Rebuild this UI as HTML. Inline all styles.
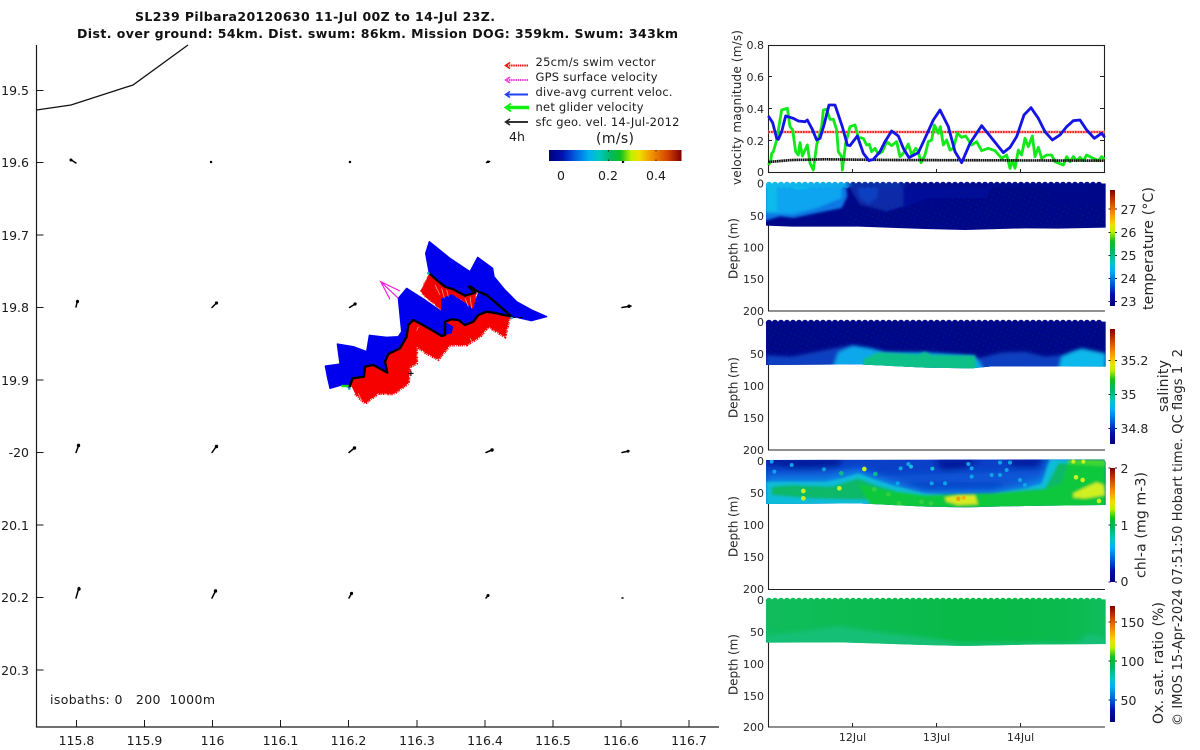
<!DOCTYPE html>
<html><head><meta charset="utf-8"><title>SL239 Pilbara20120630</title>
<style>
html,body{margin:0;padding:0;background:#fff;width:1200px;height:750px;overflow:hidden}
svg{display:block}
text{font-family:"DejaVu Sans",sans-serif;fill:#262626;font-size:11px;white-space:pre}
.m{font-size:12.5px;fill:#1a1a1a}
.c{font-size:12.5px}
.l{font-size:14px}
.leg{font-size:11.5px;fill:#1a1a1a}
</style></head><body>
<svg width="1200" height="750" viewBox="0 0 1200 750" xmlns="http://www.w3.org/2000/svg">
<defs>
<linearGradient id="jv" x1="0" y1="1" x2="0" y2="0">
<stop offset="0" stop-color="#00007f"/><stop offset=".1" stop-color="#0010b0"/><stop offset=".2" stop-color="#0060e0"/><stop offset=".3" stop-color="#00b0f0"/><stop offset=".38" stop-color="#00c8c0"/><stop offset=".47" stop-color="#00b860"/><stop offset=".56" stop-color="#10c020"/><stop offset=".64" stop-color="#c0f000"/><stop offset=".7" stop-color="#f0e000"/><stop offset=".8" stop-color="#f09000"/><stop offset=".9" stop-color="#d04000"/><stop offset="1" stop-color="#800000"/>
</linearGradient>
<linearGradient id="jh" x1="0" y1="0" x2="1" y2="0">
<stop offset="0" stop-color="#00007f"/><stop offset=".1" stop-color="#0010b0"/><stop offset=".2" stop-color="#0060e0"/><stop offset=".3" stop-color="#00b0f0"/><stop offset=".38" stop-color="#00c8c0"/><stop offset=".47" stop-color="#00b860"/><stop offset=".54" stop-color="#10c020"/><stop offset=".62" stop-color="#c0f000"/><stop offset=".68" stop-color="#f0e000"/><stop offset=".78" stop-color="#f09000"/><stop offset=".9" stop-color="#d04000"/><stop offset="1" stop-color="#800000"/>
</linearGradient>
<linearGradient id="tt" gradientUnits="userSpaceOnUse" x1="766" y1="0" x2="1106" y2="0">
<stop offset="0" stop-color="#10bcec"/><stop offset=".23" stop-color="#10a8ec"/><stop offset=".255" stop-color="#0a30a8"/><stop offset=".39" stop-color="#0a30a8"/><stop offset=".42" stop-color="#040c90"/><stop offset="1" stop-color="#00088a"/>
</linearGradient>
<linearGradient id="ox" gradientUnits="userSpaceOnUse" x1="766" y1="0" x2="1106" y2="0">
<stop offset="0" stop-color="#10bc5c"/><stop offset=".35" stop-color="#0cbb50"/><stop offset=".6" stop-color="#08ba46"/><stop offset=".85" stop-color="#0aba4c"/><stop offset="1" stop-color="#10bc5c"/>
</linearGradient>
<filter id="b1" x="-5%" y="-5%" width="110%" height="110%"><feGaussianBlur stdDeviation="1.300"/></filter>
<filter id="b15" x="-5%" y="-10%" width="110%" height="120%"><feGaussianBlur stdDeviation="1.800"/></filter>
<filter id="b2" x="-5%" y="-5%" width="110%" height="110%"><feGaussianBlur stdDeviation="2.400"/></filter>
<filter id="b3" x="-10%" y="-10%" width="120%" height="120%"><feGaussianBlur stdDeviation="3.500"/></filter>
<filter id="rough" x="-10%" y="-10%" width="120%" height="120%"><feTurbulence type="fractalNoise" baseFrequency=".25" numOctaves="2" seed="4"/><feDisplacementMap in="SourceGraphic" scale="8" xChannelSelector="R" yChannelSelector="G"/></filter>
<pattern id="dots" width="5" height="5" patternUnits="userSpaceOnUse" patternTransform="rotate(25)"><rect x="2" y="2" width="1" height="1" fill="#141e62"/></pattern>
<clipPath id="ct"><polygon transform="translate(725,175) scale(.33333)" points="123,25.500 1142,25.500 1142,158 1000,161 900,160 720,165 600,162 400,155 200,155 123,152"/></clipPath>
<clipPath id="cs"><polygon transform="translate(725,315) scale(.33333)" points="123,20 1142,20 1142,155 800,154 740,160 600,158 400,148 123,150"/></clipPath>
<clipPath id="cc"><polygon transform="translate(725,450) scale(.33333)" points="123,30 1138,28 1142,36 1142,165 900,168 720,172 600,170 400,160 123,162"/></clipPath>
<clipPath id="co"><polygon transform="translate(725,590) scale(.33333)" points="123,28 1142,28 1142,162 900,164 720,168 600,165 350,157 123,158"/></clipPath>
</defs>

<!-- Title -->
<text x="135" y="21" style="font-size:12.5px;font-weight:bold;fill:#111" textLength="360">SL239 Pilbara20120630 11-Jul 00Z to 14-Jul 23Z.</text>
<text x="77" y="38" style="font-size:12.5px;font-weight:bold;fill:#111" textLength="601">Dist. over ground: 54km. Dist. swum: 86km. Mission DOG: 359km. Swum: 343km</text>

<!-- Map axes -->
<path d="M36.5 45V727H719" fill="none" stroke="#1a1a1a" stroke-width="1.2"/>
<path d="M36.5 90.500h7M36.500 162.500h7M36.500 235h7M36.500 307.500h7M36.500 380h7M36.500 452.500h7M36.500 525h7M36.500 597.500h7M36.500 670h7M76.500 727v-7M144.500 727v-7M212.500 727v-7M280.500 727v-7M348.500 727v-7M417 727v-7M485 727v-7M553 727v-7M621 727v-7M689 727v-7" stroke="#1a1a1a" fill="none"/>
<g text-anchor="end">
<text class="m" x="29" y="95">19.5</text><text class="m" x="29" y="167">19.6</text><text class="m" x="29" y="240">19.7</text><text class="m" x="29" y="312">19.8</text><text class="m" x="29" y="385">19.9</text><text class="m" x="29" y="457">-20</text><text class="m" x="29" y="530">20.1</text><text class="m" x="29" y="602">20.2</text><text class="m" x="29" y="675">20.3</text>
</g>
<g text-anchor="middle">
<text class="m" x="76.500" y="745">115.8</text><text class="m" x="144.500" y="745">115.9</text><text class="m" x="212.500" y="745">116</text><text class="m" x="280.500" y="745">116.1</text><text class="m" x="348.500" y="745">116.2</text><text class="m" x="417" y="745">116.3</text><text class="m" x="485" y="745">116.4</text><text class="m" x="553" y="745">116.5</text><text class="m" x="621" y="745">116.6</text><text class="m" x="689" y="745">116.7</text>
</g>
<text class="m" x="50" y="704" textLength="165" xml:space="preserve">isobaths: 0   200  1000m</text>
<polyline points="36.500,110 71,105 133,85 188,45" fill="none" stroke="#111" stroke-width="1.300"/>

<!-- Map arrows -->
<g stroke="#000" stroke-width="1.500" fill="none" stroke-linecap="round">
<path d="M76 163L70.500 159.500M211 162.300h.5M349.500 162.300l.8-.5M486.500 162.500l3-1M622.500 162.300l1-.3"/>
<path d="M76 307L77.500 300.500M212 307.500L217 302.500M349.500 307.500L356 303.500M622 307.500L631 306"/>
<path d="M76 452.500L79 444.500M212 452.500L217 445.500M349 452.500L355 447.500M486 452.500L493 449.500M622 452.500L629 451"/>
<path d="M76 598L79 587.500M212 598L216 590M349 598L352 592.500M486 598L488.500 595"/>
<path d="M622 598h1"/>
</g>
<g fill="#000">
<circle cx="71" cy="160" r="1.500"/><circle cx="77.500" cy="301.500" r="1.600"/><circle cx="216.500" cy="303" r="1.600"/><circle cx="355" cy="304" r="1.600"/><circle cx="629" cy="306.200" r="1.700"/>
<circle cx="78.500" cy="445.500" r="1.700"/><circle cx="216.500" cy="446.500" r="1.700"/><circle cx="354.500" cy="448" r="1.700"/><circle cx="492" cy="450" r="1.700"/><circle cx="628" cy="451.200" r="1.400"/>
<circle cx="79" cy="589" r="1.700"/><circle cx="215.500" cy="591" r="1.700"/><circle cx="351.500" cy="593.500" r="1.600"/><circle cx="488" cy="595.500" r="1.500"/>
<circle cx="211" cy="162" r="1.200"/><circle cx="350" cy="162" r="1.200"/><circle cx="488" cy="161.800" r="1.300"/>
</g>

<!-- Glider track blob -->
<g transform="translate(310,230) scale(.33333)">
<g filter="url(#rough)">
<polygon fill="#f20000" points="358,130 380,150 405,170 430,178 465,195 482,170 500,185 495,250 460,215 425,195 395,207 398,245 350,205 330,185"/>
</g>
<g fill="#0000ee" stroke="#0000ee" stroke-width="4" stroke-linejoin="round">
<polygon points="358,130 347,70 358,35 420,85 480,125 503,82 548,115 552,140 585,180 620,215 665,240 710,260 665,272 620,262 605,260 565,225 530,195 500,183 495,190 465,195 430,178 405,170 380,150"/>
<polygon points="118,472 95,465 60,475 52,440 46,408 90,402 82,342 130,350 170,365 178,316 230,322 265,320 275,305 265,205 290,175 345,210 395,245 395,207 425,195 465,220 490,240 505,190 530,195 605,260 560,250 530,245 505,255 490,275 465,285 445,270 425,268 405,275 430,290 425,310 395,318 365,300 335,283 310,270 295,285 290,320 270,355 235,372 225,395 232,428 190,405 165,410 162,440 128,445"/>
</g>
<polygon fill="#f60000" points="118,472 128,445 162,440 165,410 190,405 232,428 225,395 235,372 270,355 290,320 295,285 310,270 335,283 365,300 395,318 425,310 430,290 405,275 425,268 445,270 465,285 490,275 505,255 530,245 560,250 600,258 585,320 560,305 535,290 510,320 470,345 420,345 385,388 350,370 320,350 320,400 300,410 295,460 250,492 205,490 165,520 135,490 125,470"/>
<polyline fill="none" stroke="#f60000" stroke-width="9" stroke-dasharray="3 2 5 3 2 4 4 2" points="600,258 585,320 560,305 535,290 510,320 470,345 420,345 385,388 350,370 320,350 320,400 300,410 295,460 250,492 205,490 165,520 135,490"/>
<path d="M375 165l15 30M395 175l8 30M480 200l5 35M465 205l10 25M325 290l-5 12M480 325l6 10M145 490l10 22M410 180l5 20" stroke="#fff" stroke-width="2" fill="none" opacity=".7"/>
<polyline points="118,472 128,445 162,440 165,410 190,405 232,428 225,395 235,372 270,355 290,320 295,285 310,270 335,283 365,300 395,318 405,315 405,275 425,268 445,270 465,285 490,275 505,255 530,245 560,250 605,260 565,225 530,195 500,183 482,170 476,170 495,188 465,197 430,178 405,170 380,150 358,130" fill="none" stroke="#000" stroke-width="7" stroke-linejoin="round"/>
<path d="M605 262h40" stroke="#000" stroke-width="3" stroke-dasharray="12 8"/>
<path d="M94 468h22" stroke="#10e010" stroke-width="7"/>
<circle cx="118" cy="476" r="4" fill="#10b0e0"/><circle cx="355" cy="130" r="4" fill="#10b0b0"/><circle cx="605" cy="264" r="4" fill="#10b0e0"/>
<path d="M270 183L212 155L240 208M212 155L265 205" fill="none" stroke="#ee20e0" stroke-width="3.500"/>
<path d="M303 422v16M295 430h16" stroke="#000" stroke-width="3"/>
</g>

<!-- Legend -->
<g fill="none" stroke-width="1.500">
<path d="M528 65.500H507" stroke="#f01010" stroke-dasharray="1.500 .7" stroke-width="2"/><path d="M510 62.500L505.500 65.500L510 68.500" stroke="#f01010"/>
<path d="M528 80H507" stroke="#f040e0" stroke-dasharray="1.500 .7" stroke-width="2"/><path d="M510 77L505.500 80L510 83" stroke="#f040e0"/>
<path d="M528 94.500H507" stroke="#2040f0" stroke-width="2"/><path d="M510 91.500L505.500 94.500L510 97.500" stroke="#2040f0"/>
<path d="M529 107.500H507" stroke="#10f010" stroke-width="3.500"/><path d="M511 103.500L505.500 107.500L511 111.500" stroke="#10f010" stroke-width="2"/>
<path d="M528 122H507" stroke="#333" stroke-width="2"/><path d="M510 119L505.500 122L510 125" stroke="#222"/>
</g>
<text class="leg" x="535.500" y="66" textLength="120">25cm/s swim vector</text>
<text class="leg" x="535.500" y="81" textLength="122">GPS surface velocity</text>
<text class="leg" x="535.500" y="96" textLength="137">dive-avg current veloc.</text>
<text class="leg" x="535.500" y="111" textLength="108">net glider velocity</text>
<text class="leg" x="535.500" y="126" textLength="144">sfc geo. vel. 14-Jul-2012</text>
<text x="509" y="141" style="font-size:12.5px;fill:#1a1a1a">4h</text>
<text x="596" y="143" style="font-size:14px;fill:#1a1a1a" textLength="38">(m/s)</text>
<rect x="549" y="150" width="132.500" height="11" fill="url(#jh)"/>
<path d="M561 150v1.500M608.500 150v1.500M656 150v1.500M561 161v-1.500M608.500 161v-1.500M656 161v-1.500" stroke="#222"/>
<path d="M622 161.500l2 .5" stroke="#000" stroke-width="1.500"/>
<g text-anchor="middle"><text class="m" x="561" y="180">0</text><text class="m" x="608" y="180">0.2</text><text class="m" x="656" y="180">0.4</text></g>

<!-- Velocity chart -->
<rect x="768.500" y="45.500" width="336" height="127" fill="#fff" stroke="#222" stroke-width="1.100"/>
<path d="M1104 76.500h-4M1104 108.500h-4M1104 140.500h-4M768 76.500h4M768 108.500h4M768 140.500h4M852.500 172v-3M936.500 172v-3M1020.500 172v-3" stroke="#222"/>
<g text-anchor="end"><text x="764" y="49">0.8</text><text x="764" y="81">0.6</text><text x="764" y="113">0.4</text><text x="764" y="145">0.2</text><text x="764" y="176">0</text></g>
<text transform="translate(741,185) rotate(-90)" style="font-size:12px" textLength="155">velocity magnitude (m/s)</text>
<g transform="translate(725,30) scale(.33333)" fill="none" stroke-linejoin="round">
<path d="M130 306H1139" stroke="#ffb0b0" stroke-width="9"/>
<path d="M130 306H1139" stroke="#f01010" stroke-width="5" stroke-dasharray="5 3"/>
<polyline stroke="#12e81a" stroke-width="8.500" points="130,405 137,395 140,370 145,365 155,330 170,240 187,235 195,290 203,300 212,365 220,375 225,338 232,378 247,345 255,400 265,420 275,345 290,290 295,240 305,238 315,268 325,268 335,300 340,365 350,380 352,420 362,340 375,290 390,285 400,322 415,325 425,345 433,343 440,365 450,355 460,372 472,365 485,335 500,347 515,335 525,380 535,370 550,342 560,375 572,355 580,365 588,398 600,375 610,335 620,330 628,285 640,310 646,290 655,345 665,330 675,360 685,355 697,310 710,322 722,318 740,345 755,335 770,362 790,355 810,362 830,385 845,375 855,415 862,392 870,415 880,360 890,375 900,325 910,350 922,318 930,380 940,352 950,385 965,375 980,375 990,395 1015,405 1025,380 1035,395 1045,380 1055,392 1065,382 1075,392 1085,375 1105,385 1120,392 1130,380 1139,388"/>
<polyline stroke="#111" stroke-width="8" stroke-dasharray="5 1.500" points="130,396 200,390 300,388 500,390 1139,392"/>
<polyline stroke="#1414e6" stroke-width="8.500" points="130,258 143,278 155,325 160,328 170,305 182,258 205,265 220,273 240,275 247,270 262,298 275,330 285,325 297,285 312,225 330,225 352,290 367,345 375,347 397,318 415,370 432,392 445,388 465,365 480,335 500,303 520,318 535,355 552,383 580,368 600,325 625,270 645,240 670,290 690,365 710,398 735,340 770,287 835,368 855,352 875,320 897,255 918,233 940,265 960,305 982,330 1005,315 1025,290 1045,272 1065,270 1085,300 1108,325 1130,310 1139,322"/>
</g>

<!-- Depth axes -->
<path d="M768.500 184V311H1105M768.500 322V450H1105M768.500 461V589.500H1105M768.500 600V727H1105" fill="none" stroke="#222" stroke-width="1.100"/>
<path d="M852.500 727v-4M936.500 727v-4M1020.500 727v-4" stroke="#222"/>
<g text-anchor="end">
<text x="764" y="187.500">0</text><text x="764" y="220">50</text><text x="764" y="251.500">100</text><text x="764" y="283">150</text><text x="764" y="315">200</text>
<text x="764" y="326">0</text><text x="764" y="358">50</text><text x="764" y="390">100</text><text x="764" y="422">150</text><text x="764" y="454">200</text>
<text x="764" y="465">0</text><text x="764" y="497">50</text><text x="764" y="529">100</text><text x="764" y="561">150</text><text x="764" y="593">200</text>
<text x="764" y="604">0</text><text x="764" y="636">50</text><text x="764" y="668">100</text><text x="764" y="700">150</text><text x="764" y="731">200</text>
</g>
<text transform="translate(737.500,279) rotate(-90)" style="font-size:12px" textLength="61">Depth (m)</text>
<text transform="translate(737.500,418) rotate(-90)" style="font-size:12px" textLength="61">Depth (m)</text>
<text transform="translate(737.500,557) rotate(-90)" style="font-size:12px" textLength="61">Depth (m)</text>
<text transform="translate(737.500,695) rotate(-90)" style="font-size:12px" textLength="61">Depth (m)</text>
<g text-anchor="middle"><text x="852.500" y="741">12Jul</text><text x="936.500" y="741">13Jul</text><text x="1020.500" y="741">14Jul</text></g>

<!-- Temperature field -->
<g clip-path="url(#ct)">
<rect x="760" y="180" width="350" height="60" fill="#00088a"/>
<g filter="url(#b1)"><g transform="translate(760,178) scale(.33333)">
<polygon fill="#040e98" points="430,0 700,0 680,60 500,60 430,90"/>
<polygon fill="#0a2ca8" points="250,0 430,0 430,85 380,100 300,80"/>
<polygon fill="#0a40c0" points="285,0 360,0 350,60 325,78 300,60"/>
<polygon fill="#0a78e4" points="15,0 255,0 262,55 245,90 170,105 100,120 60,115 15,128"/>
<polygon fill="#0ea4f0" points="15,0 245,0 245,60 170,90 100,108 15,105"/>
<polygon fill="#10bce8" points="15,0 50,0 50,100 15,100"/>
<polygon fill="#10cce8" points="85,0 165,0 140,30 105,32"/>
</g></g>
<rect x="845" y="205" width="261" height="26" fill="url(#dots)"/>
<rect x="950" y="185" width="100" height="20" fill="url(#dots)"/>
</g>
<line x1="769" y1="185" x2="1103" y2="185" stroke="url(#tt)" stroke-width="6.400" stroke-linecap="round" stroke-dasharray="0 6"/>

<!-- Salinity field -->
<g clip-path="url(#cs)">
<rect x="760" y="318" width="350" height="60" fill="#00088a"/>
<rect x="766" y="322" width="340" height="36" fill="url(#dots)"/>
<g filter="url(#b15)"><g transform="translate(725,315) scale(.33333)">
<polygon fill="#0a40c0" points="123,120 200,125 300,105 380,90 440,100 480,110 580,115 700,125 760,130 830,112 900,110 960,125 1010,120 1070,100 1142,115 1142,170 123,170"/>
<polygon fill="#10a8ec" points="340,112 385,92 440,100 480,112 600,112 750,122 780,170 320,170"/>
<polygon fill="#10b8ec" points="1010,125 1040,110 1070,100 1142,115 1142,170 1000,170"/>
</g></g>
<g filter="url(#b1)"><g transform="translate(725,315) scale(.33333)">
<polygon fill="#08c088" points="415,132 460,112 580,118 600,110 620,120 750,122 755,170 420,170"/>
</g></g>
</g>
<line x1="769" y1="323" x2="1103" y2="323" stroke="#00088a" stroke-width="6.400" stroke-linecap="round" stroke-dasharray="0 6"/>

<!-- Chl-a field -->
<g clip-path="url(#cc)">
<rect x="760" y="455" width="350" height="60" fill="#0a40c8"/>
<g filter="url(#b3)"><g transform="translate(725,450) scale(.33333)">
<polygon fill="#041499" points="123,25 350,25 345,50 240,58 123,45"/>
<polygon fill="#041499" points="630,25 770,25 720,55 650,62"/>
<polygon fill="#041499" points="850,25 960,25 930,52 860,50"/>
<polygon fill="#0a58d8" points="123,65 300,60 360,55 440,70 500,95 950,100 960,60 123,90"/>
<polygon fill="#0a80e4" points="123,80 300,80 350,70 400,55 450,75 500,95 600,120 800,118 900,100 950,85 970,25 1010,25 1010,170 123,170"/>
</g></g>
<g filter="url(#b1)"><g transform="translate(725,450) scale(.33333)">
<polygon fill="#10bcd8" points="123,95 200,95 300,95 350,85 400,70 440,85 500,105 600,130 700,135 800,130 900,115 950,100 975,28 1142,28 1142,175 123,175"/>
<polygon fill="#10b868" points="140,110 200,105 320,110 350,100 400,85 450,105 520,125 600,135 700,135 800,130 900,120 960,115 1000,40 1142,30 1142,175 450,175 450,150 250,145 140,135"/>
<polygon fill="#0cc83c" points="400,100 450,115 520,125 600,135 800,130 950,120 1010,100 1030,40 1142,35 1142,175 440,175"/>
<polygon fill="#40d830" points="1030,28 1142,28 1142,48 1030,42"/>
<polygon fill="#d8e820" points="660,142 700,135 750,135 758,162 700,165 665,155"/>
<polygon fill="#d0f020" points="1045,130 1075,115 1115,97 1135,105 1140,135 1080,145 1045,142"/>
</g></g>
<g transform="translate(725,450) scale(.33333)">
<g fill="#c8f020"><circle cx="418" cy="57" r="7"/><circle cx="235" cy="123" r="7"/><circle cx="235" cy="145" r="7"/><circle cx="343" cy="115" r="7"/><circle cx="1053" cy="82" r="7"/><circle cx="1073" cy="90" r="7"/><circle cx="1122" cy="153" r="7"/><circle cx="1045" cy="35" r="6"/><circle cx="1075" cy="35" r="6"/></g>
<g fill="#30d040"><circle cx="490" cy="133" r="7"/><circle cx="448" cy="118" r="7"/><circle cx="590" cy="155" r="7"/><circle cx="618" cy="160" r="7"/><circle cx="522" cy="160" r="7"/></g>
<g fill="#10b890"><circle cx="349" cy="70" r="7"/><circle cx="451" cy="72" r="7"/></g>
<g fill="#0ea4e8"><circle cx="558" cy="50" r="6" fill="#10c0d8"/><circle cx="622" cy="56" r="6" fill="#10c0d8"/><circle cx="730" cy="42" r="6"/><circle cx="740" cy="55" r="6"/><circle cx="740" cy="80" r="6"/><circle cx="855" cy="38" r="6"/><circle cx="845" cy="60" r="6"/><circle cx="825" cy="75" r="6"/><circle cx="800" cy="75" r="6"/><circle cx="825" cy="38" r="6"/><circle cx="660" cy="100" r="6"/><circle cx="620" cy="100" r="6"/><circle cx="518" cy="100" r="6"/><circle cx="900" cy="105" r="6"/><circle cx="885" cy="90" r="6"/><circle cx="200" cy="45" r="6"/><circle cx="140" cy="35" r="6"/><circle cx="297" cy="58" r="6" fill="#10a0d8"/><circle cx="148" cy="65" r="6"/><circle cx="527" cy="55" r="6"/><circle cx="550" cy="42" r="6"/></g>
<circle cx="700" cy="146" r="7" fill="#f0a010"/><circle cx="716" cy="143" r="6" fill="#f0b010"/>
</g>
</g>

<!-- Oxygen field -->
<g clip-path="url(#co)">
<rect x="760" y="596" width="350" height="70" fill="url(#ox)"/>
<g filter="url(#b2)"><g transform="translate(725,590) scale(.33333)">
<polygon fill="#12bf76" points="123,135 230,124 340,108 450,125 600,142 700,158 1060,158 1090,132 1142,142 1142,180 123,180"/>
</g></g>
</g>
<line x1="769" y1="601" x2="1103" y2="601" stroke="url(#ox)" stroke-width="6.400" stroke-linecap="round" stroke-dasharray="0 6"/>

<!-- Colourbars -->
<rect x="1110" y="190" width="5" height="116" fill="url(#jv)"/>
<rect x="1110" y="329" width="5" height="115" fill="url(#jv)"/>
<rect x="1110" y="468" width="5" height="114" fill="url(#jv)"/>
<rect x="1110" y="606" width="5" height="116" fill="url(#jv)"/>
<path d="M1108.500 209h2M1108.500 232.500h2M1108.500 255.500h2M1108.500 278.500h2M1108.500 301.500h2M1115 209h2M1115 232.500h2M1115 255.500h2M1115 278.500h2M1115 301.500h2M1115 360.500h2M1115 394.500h2M1115 428.500h2M1108.500 360.500h2M1108.500 394.500h2M1108.500 428.500h2M1115 468h2M1115 525h2M1115 582h2M1108.500 468h2M1108.500 525h2M1108.500 582h2M1115 622h2M1115 661h2M1115 700h2M1108.500 622h2M1108.500 661h2M1108.500 700h2" stroke="#222"/>
<g>
<text class="c" x="1120.500" y="214">27</text><text class="c" x="1120.500" y="237">26</text><text class="c" x="1120.500" y="260">25</text><text class="c" x="1120.500" y="283">24</text><text class="c" x="1120.500" y="306">23</text>
<text class="c" x="1120.500" y="365">35.2</text><text class="c" x="1120.500" y="399">35</text><text class="c" x="1120.500" y="433">34.8</text>
<text class="c" x="1120.500" y="473">2</text><text class="c" x="1120.500" y="530">1</text><text class="c" x="1120.500" y="586">0</text>
<text class="c" x="1120.500" y="627">150</text><text class="c" x="1120.500" y="666">100</text><text class="c" x="1120.500" y="705">50</text>
</g>
<text class="l" transform="translate(1153,310) rotate(-90)" textLength="123">temperature (°C)</text>
<text class="l" transform="translate(1168,412) rotate(-90)" textLength="52">salinity</text>
<text class="l" transform="translate(1145.500,578) rotate(-90)" textLength="106">chl-a (mg m-3)</text>
<text class="l" transform="translate(1163,724) rotate(-90)" textLength="122">Ox. sat. ratio (%)</text>
<text transform="translate(1182,726) rotate(-90)" style="font-size:13px" textLength="377" xml:space="preserve">© IMOS 15-Apr-2024 07:51:50 Hobart time. QC flags 1  2</text>
</svg>
</body></html>
